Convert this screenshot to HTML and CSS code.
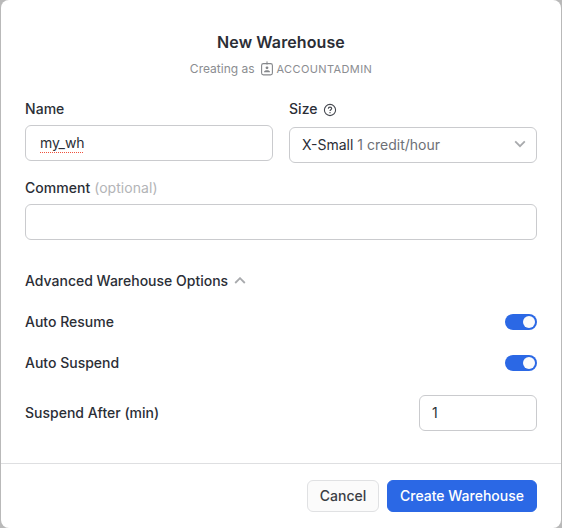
FILE: index.html
```html
<!DOCTYPE html>
<html lang="en">
<head>
<meta charset="utf-8">
<title>New Warehouse</title>
<link rel="stylesheet" href="styles.css">
</head>
<body>
<main class="dialog">
  <header class="header">
    <h1 class="title">New Warehouse</h1>
    <div class="subtitle">
      <span class="creating">Creating as</span>
      <svg class="badge" width="12" height="15" viewBox="0 0 12 15" fill="none" stroke="#85878b">
        <rect x=".6" y="2.6" width="10.8" height="11.3" rx="1.8" stroke-width="1.1"/>
        <path d="M6 .4v3.2"/>
        <circle cx="6" cy="6.8" r="1.4" fill="#85878b" stroke="none"/>
        <path d="M3 11.300V11c0-1.100 1.300-1.700 3-1.700s3 .6 3 1.700v.3z" fill="#85878b" stroke="none"/>
      </svg>
      <span class="role">ACCOUNTADMIN</span>
    </div>
  </header>
  <section class="body">
    <div class="columns">
      <div class="field">
        <div class="label">Name</div>
        <div class="input name-input"><span class="misspelled">my_wh</span></div>
      </div>
      <div class="field size-field">
        <div class="label">Size
          <svg class="help" width="14" height="14" viewBox="0 0 14 14" fill="none" stroke="#45484f" stroke-width="1.1">
            <circle cx="7" cy="7" r="5.600"/>
            <path d="M5.300 5.700c0-1 .7-1.600 1.700-1.600s1.700.6 1.700 1.500c0 1.200-1.700 1.200-1.700 2.500"/>
            <path d="M7 9v1.200"/>
          </svg>
        </div>
        <div class="input select">
          <span class="value">X-Small <span class="muted">1 credit/hour</span></span>
          <svg class="caret" width="12" height="8" viewBox="0 0 12 8" fill="none" stroke="#a8aaad" stroke-width="1.800"><path d="M1.200 1.400 6 6.200l4.800-4.800"/></svg>
        </div>
      </div>
    </div>
    <div class="field comment">
      <div class="label">Comment&nbsp;<span class="optional">(optional)</span></div>
      <div class="input"></div>
    </div>
    <div class="row advanced">Advanced Warehouse Options
      <svg class="caret" width="12" height="8" viewBox="0 0 12 8" fill="none" stroke="#a8aaad" stroke-width="1.800"><path d="M1.200 6 6 1.200 10.800 6"/></svg>
    </div>
    <div class="row toggle-row">Auto Resume<span class="toggle"></span></div>
    <div class="row toggle-row">Auto Suspend<span class="toggle"></span></div>
    <div class="row minutes">Suspend After (min)<div class="input minutes-input">1</div></div>
  </section>
  <footer class="footer">
    <button class="button cancel">Cancel</button>
    <button class="button create">Create Warehouse</button>
  </footer>
</main>
</body>
</html>
```
FILE: styles.css
```css
* { box-sizing: border-box; }
body {
  margin: 0;
  height: 528px;
  padding: 0 1px;
  overflow: hidden;
  background: #b9b9b9;
  font-family: Inter, "Liberation Sans", sans-serif;
  font-size: 14px;
  line-height: 20px;
  font-weight: 500;
  color: #2b2e36;
}
.dialog {
  height: 528px;
  display: flex;
  flex-direction: column;
  background: #fff;
  border-radius: 8px;
}
.header {
  display: flex;
  flex-direction: column;
  align-items: center;
  padding-top: 32px;
}
.title {
  margin: 0;
  font-size: 16px;
  line-height: 20px;
  font-weight: 600;
  letter-spacing: 0.1px;
}
.subtitle {
  display: flex;
  align-items: center;
  height: 16px;
  margin-top: 9px;
  font-size: 12px;
  line-height: 16px;
  font-weight: 400;
  color: #8b8d91;
}
.badge { margin: -2px 4px 0 6px; }
.role { font-size: 11px; letter-spacing: 0.38px; }
.body { padding: 22px 24px 0; }
.columns { display: grid; grid-template-columns: 248px 248px; gap: 16px; }
.label { display: flex; align-items: center; height: 20px; letter-spacing: 0.05px; }
.input {
  display: flex;
  align-items: center;
  height: 36px;
  margin-top: 6px;
  padding: 0 12px;
  border: 1px solid #cacbce;
  border-radius: 6px;
  font-weight: 400;
}
.name-input { padding-left: 14px; }
.misspelled {
  letter-spacing: -0.1px;
  text-decoration: underline dotted #f0523d 1px;
  text-decoration-skip-ink: none;
  text-underline-offset: 4px;
}
.help { margin: 1px 0 0 5px; }
.select { margin-top: 8px; padding-right: 10px; justify-content: space-between; }
.select .caret { margin-top: -2px; }
.muted { color: #6d7076; }
.comment { margin-top: 15px; }
.optional { color: #b3b4b7; font-weight: 400; }
.row { display: flex; align-items: center; height: 20px; }
.advanced { margin-top: 31px; gap: 6px; }
.toggle-row { justify-content: space-between; margin-top: 21px; }
.toggle {
  display: flex;
  justify-content: flex-end;
  align-items: center;
  width: 32px;
  height: 16px;
  padding-right: 2px;
  border-radius: 8px;
  background: #2b68e5;
}
.toggle::before {
  content: "";
  width: 12px;
  height: 12px;
  border-radius: 50%;
  background: #fbfbfb;
}
.minutes { height: 36px; margin-top: 22px; justify-content: space-between; }
.minutes-input { width: 118px; margin: 0; }
.footer {
  height: 65px;
  margin-top: auto;
  padding: 16px 24px 0;
  display: flex;
  justify-content: flex-end;
  gap: 8px;
  border-top: 1px solid #dedfe1;
}
.button {
  height: 32px;
  padding: 0;
  border: 1px solid #e0e1e3;
  border-radius: 6px;
  font: inherit;
}
.cancel { width: 72px; background: #fbfbfb; color: #3b3e45; }
.create { width: 150px; border-color: #2b68e5; background: #2b68e5; color: #fff; }
```
